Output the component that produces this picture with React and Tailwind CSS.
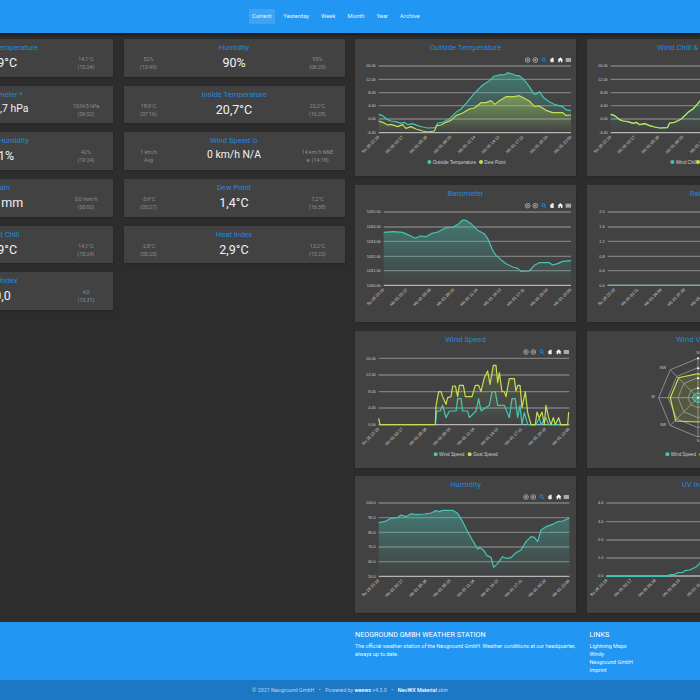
import React from "react";

const TEAL = "#45c4b4";
const LIME = "#c4e04e";

const temp = "88,238 100,242 115,254 125,258 140,260 155,265 165,262 175,269 190,266 205,272 220,276 235,279 258,278 265,264 280,262 300,252 320,232 335,222 350,205 375,175 400,150 420,137 435,123 455,119 465,120 475,113 490,117 500,122 510,122 525,135 540,155 553,176 560,178 570,170 585,190 600,200 615,208 640,215 650,224 665,227";
const dew = "88,258 100,262 115,270 125,268 145,275 160,269 170,280 185,275 200,282 220,288 235,291 255,288 262,272 275,270 290,262 305,256 320,242 340,234 360,222 375,219 395,203 410,203 425,197 437,208 450,197 470,185 495,185 510,182 525,190 540,198 555,214 570,213 590,226 610,233 640,233 650,241 665,240";
const baro = "103,156 130,154 160,156 180,165 198,174 212,167 230,169 245,160 265,155 275,150 290,142 310,140 325,133 340,119 350,120 365,130 385,150 405,160 417,178 430,210 440,225 455,238 470,250 490,260 505,264 515,273 540,272 555,255 570,247 600,247 610,254 625,250 640,243 665,241";
const gust = "88,277 92,296 258,296 260,240 268,197 275,197 280,212 290,235 295,215 305,212 310,180 318,180 325,212 330,178 342,178 348,212 368,212 378,178 388,178 395,197 405,155 415,135 422,175 432,118 440,118 445,170 450,140 458,197 465,197 470,212 480,158 495,158 500,195 505,178 512,178 518,245 528,197 535,260 545,296 558,296 563,258 570,275 578,258 585,296 590,238 598,275 605,296 612,275 618,296 628,275 634,296 655,296 658,258";
const wind = "258,296 262,255 272,255 280,238 290,275 300,255 320,255 325,218 335,218 340,255 355,255 360,275 380,255 388,218 395,255 420,238 428,197 438,197 445,238 465,238 480,275 488,218 498,218 505,275 512,238 518,296 525,260 535,296 560,296 570,275 575,296 590,275 598,296 655,296";
const hum = "88,158 105,155 125,145 145,142 155,135 170,140 185,131 200,134 225,132 245,129 260,122 270,125 280,121 310,121 325,130 340,155 355,185 370,212 385,237 392,232 405,243 412,256 425,262 433,292 445,280 460,260 470,265 485,263 500,248 515,240 530,215 545,200 555,202 565,215 575,180 590,170 610,163 625,155 640,153 660,144";
const uv = "770,319 955,319 960,314 975,313 985,308 1000,307 1005,302 1020,300 1040,290 1050,280 1060,262 1100,220 1150,210 1355,300";

const labels9 = ["Su 28 23:18", "Mo 01 02:17", "Mo 01 05:16", "Mo 01 08:15", "Mo 01 11:14", "Mo 01 14:13", "Mo 01 17:11", "Mo 01 20:10", "Mo 01 23:09"];
const rainLabels = ["Su 28 23:18", "Mo 01 02:11", "Mo 01 04:54", "Mo 01 07:38", "Mo 01 10:21", "Mo 01 13:05", "Mo 01 15:48", "Mo 01 18:32", "Mo 01 21:15"];

function Toolbar({ xs, y }) {
  return (
    <g>
      {[0, 1].map((i) => (
        <g key={i}>
          <circle cx={xs[i]} cy={y} r="7" fill="none" stroke="#c8c8c8" strokeWidth="2" />
          <circle cx={xs[i]} cy={y} r="3.5" fill="#9a9a9a" />
        </g>
      ))}
      <circle cx={xs[2] - 1} cy={y - 2} r="4.5" fill="none" stroke="#1e88e5" strokeWidth="3" />
      <path d={`M${xs[2] + 2} ${y + 1}l5 6`} stroke="#1e88e5" strokeWidth="3" />
      <path d={`M${xs[3] - 6} ${y - 1}l6 -6h5v14h-9z`} fill="#e8e8e8" />
      <path d={`M${xs[4] - 8} ${y}l8 -8 8 8h-2v7h-4v-5h-4v5h-4v-7z`} fill="#ffffff" />
      <rect x={xs[5] - 8} y={y - 6} width="16" height="12" fill="#a8a8a8" />
    </g>
  );
}

function Series({ points, color, fill, base, id, strength = 0.42 }) {
  const first = points.split(" ")[0].split(",")[0];
  const last = points.split(" ").slice(-1)[0].split(",")[0];
  return (
    <g>
      {fill && (
        <>
          <defs>
            <linearGradient id={id} x1="0" y1="0" x2="0" y2="1">
              <stop offset="0" stopColor={color} stopOpacity={strength} />
              <stop offset="1" stopColor={color} stopOpacity="0" />
            </linearGradient>
          </defs>
          <polygon points={`${first},${base} ${points} ${last},${base}`} fill={`url(#${id})`} />
        </>
      )}
      <polyline points={points} fill="none" stroke={color} strokeWidth="3.6" strokeLinejoin="round" />
    </g>
  );
}

function Chart({ title, ox, oy, grid, yLabels, left, right, xStart, xPitch, xLabels = labels9, series = [], legend = [], legendY, toolbar, children }) {
  const base = grid ? grid[grid.length - 1] : 0;
  return (
    <div className="h-[137px] w-[221px] overflow-hidden bg-[#424242] shadow-[0_1px_2px_rgba(0,0,0,0.2)]">
      <div className="h-[18px] text-center text-[7.7px] leading-[18px] text-[#2389dd]">{title}</div>
      <svg viewBox="0 0 663 357" className="block h-[119px] w-[221px]" style={{ fontFamily: '"Liberation Sans", sans-serif' }}>
        <g transform={`translate(${-ox} ${-(oy + 54)})`}>
          {grid &&
            grid.map((y, i) => (
              <g key={y}>
                <line x1={left} x2={right} y1={y} y2={y} stroke={i === grid.length - 1 ? "#b5b5b5" : "#7e7e7e"} strokeWidth="4" />
                <text x={left - 9} y={y + 4} textAnchor="end" fontSize="11.5" fill="#d0d0d0">{yLabels[i]}</text>
              </g>
            ))}
          {series.map((s, i) => (
            <Series key={i} {...s} base={base} id={`${title.replace(/\W/g, "")}${i}`} />
          ))}
          {grid &&
            xLabels.map((l, i) => {
              const x = xStart + xPitch * i;
              return (
                <text key={l} x={x + 2} y={base + 14} textAnchor="end" fontSize="12.5" fill="#d8d8d8" transform={`rotate(-45 ${x + 2} ${base + 14})`}>{l}</text>
              );
            })}
          {children}
          {toolbar && <Toolbar xs={toolbar.xs} y={toolbar.y} />}
          {legend.map((l) => (
            <g key={l.label}>
              <circle cx={l.x} cy={legendY} r="6" fill={l.color} />
              <text x={l.x + 10} y={legendY + 5} fontSize="14" fill="#d0d0d0">{l.label}</text>
            </g>
          ))}
        </g>
      </svg>
    </div>
  );
}

function Rose() {
  const cx = 355, cy = 215;
  const oct = (r) =>
    [0, 1, 2, 3, 4, 5, 6, 7]
      .map((i) => {
        const a = (i * Math.PI) / 4;
        return `${cx + r * Math.sin(a)},${cy - r * Math.cos(a)}`;
      })
      .join(" ");
  return (
    <g>
      {[30, 60, 90, 118].map((r) => (
        <polygon key={r} points={oct(r)} fill="none" stroke="#9a9a9a" strokeWidth="2.5" />
      ))}
      {[0, 1, 2, 3, 4, 5, 6, 7].map((i) => {
        const a = (i * Math.PI) / 4;
        return <line key={i} x1={cx} y1={cy} x2={cx + 118 * Math.sin(a)} y2={cy - 118 * Math.cos(a)} stroke="#9a9a9a" strokeWidth="2.5" />;
      })}
      <polygon points="355,143 410,160 435,215 410,275 355,288 288,285 272,215 297,155" fill={LIME} fillOpacity="0.14" stroke={LIME} strokeWidth="3.6" />
      <polygon points="355,200 368,208 375,215 368,225 355,230 345,225 338,215 345,205" fill={TEAL} fillOpacity="0.3" stroke={TEAL} strokeWidth="3.6" />
      {[97, 127, 157, 187, 215].map((y) => (
        <circle key={y} cx={cx} cy={y} r="3" fill="#fff" />
      ))}
      <text x="355" y="83" textAnchor="middle" fontSize="11.5" fill="#c8c8c8">N</text>
      <text x="250" y="130" textAnchor="middle" fontSize="11.5" fill="#c8c8c8">NW</text>
      <text x="220" y="216" textAnchor="middle" fontSize="11.5" fill="#c8c8c8">W</text>
      <text x="250" y="299" textAnchor="middle" fontSize="11.5" fill="#c8c8c8">SW</text>
      <text x="355" y="347" textAnchor="middle" fontSize="11.5" fill="#c8c8c8">S</text>
    </g>
  );
}

function Stat({ title, value, min, minAt, max, maxAt, small }) {
  return (
    <div className="grid h-[37.6px] w-[221px] grid-cols-[54px_1fr_54px] bg-[#424242] shadow-[0_1px_2px_rgba(0,0,0,0.2)]">
      <div className="pr-[4px] pt-[16px] text-center text-[5.3px] leading-[8px] text-[#8f8f8f]">
        <div>{min}</div>
        <div>{minAt}</div>
      </div>
      <div className="pt-[3px] text-center">
        <div className="text-[7.6px] leading-[12px] text-[#2389dd]">{title}</div>
        <div className={small ? "text-[10.4px] leading-[16px] text-[#f2f2f2]" : "text-[12.5px] leading-[17px] text-[#f2f2f2]"}>{value}</div>
      </div>
      <div className="pt-[16px] text-center text-[5.3px] leading-[8px] text-[#8f8f8f]">
        <div>{max}</div>
        <div>{maxAt}</div>
      </div>
    </div>
  );
}

const navItems = ["Current", "Yesterday", "Week", "Month", "Year", "Archive"];

export default function App() {
  return (
    <div className="h-[700px] w-[700px] overflow-hidden bg-[#2d2d2d] font-['Roboto',sans-serif]">
      <header className="flex h-[33px] items-center gap-[5px] bg-[#2196f3] pl-[248.5px] shadow-[0_2px_3px_rgba(0,0,0,0.4)]">
        {navItems.map((n, i) => (
          <span key={n} className={`px-[3.5px] py-[4px] text-[5.9px] leading-[7px] text-[#e8f4fe] ${i === 0 ? "bg-[#3fa3f4]" : ""}`}>{n}</span>
        ))}
      </header>

      <main className="-ml-[108px] grid h-[589px] w-[916px] grid-cols-[repeat(4,221px)] gap-x-[10.5px] pt-[6px]">
        <div className="flex flex-col gap-[9.1px]">
          <Stat title="Outside Temperature" value="2,9°C" min="-2,6°C" minAt="(05:24)" max="14,1°C" maxAt="(15:24)" />
          <Stat small title="Barometer *" value="1032,7 hPa" min="1030,9 hPa" minAt="(17:21)" max="1034,5 hPa" maxAt="(09:52)" />
          <Stat title="Inside Humidity" value="41%" min="38%" minAt="(07:12)" max="42%" maxAt="(19:24)" />
          <Stat title="Rain" value="0,0 mm" min="0,0 mm" minAt="Today" max="0,0 mm/h" maxAt="(00:00)" />
          <Stat title="Wind Chill" value="2,9°C" min="-2,6°C" minAt="(05:24)" max="14,1°C" maxAt="(15:24)" />
          <Stat title="UV Index" value="0,0" min="0,0" minAt="(00:00)" max="4,0" maxAt="(13:31)" />
        </div>
        <div className="flex flex-col gap-[9.1px]">
          <Stat title="Humidity" value="90%" min="52%" minAt="(13:49)" max="95%" maxAt="(06:29)" />
          <Stat title="Inside Temperature" value="20,7°C" min="18,9°C" minAt="(07:16)" max="22,2°C" maxAt="(16:28)" />
          <Stat small title={<>Wind Speed <span className="text-[6.5px]">⊙</span></>} value="0 km/h N/A" min="1 km/h" minAt="Avg" max="14 km/h NNE" maxAt="⊛ (14:18)" />
          <Stat title="Dew Point" value="1,4°C" min="-3,9°C" minAt="(05:27)" max="7,2°C" maxAt="(16:38)" />
          <Stat title="Heat Index" value="2,9°C" min="-2,8°C" minAt="(05:25)" max="13,2°C" maxAt="(15:23)" />
        </div>
        <div className="flex flex-col gap-[8.8px]">
          <Chart title="Outside Temperature" ox={17} oy={12} grid={[93, 133, 173, 212, 252, 293]} yLabels={["16.00", "12.00", "8.00", "4.00", "0.00", "-4.00"]} left={88} right={665} xStart={88} xPitch={72.2}
            series={[{ points: temp, color: TEAL, fill: true }, { points: dew, color: LIME, fill: true }]}
            legend={[{ x: 240, color: TEAL, label: "Outside Temperature" }, { x: 395, color: LIME, label: "Dew Point" }]} legendY={381}
            toolbar={{ xs: [535, 558, 583, 608, 633, 657], y: 75 }} />
          <Chart title="Barometer" ox={17} oy={14} grid={[95, 140, 183, 228, 271, 315]} yLabels={["1035.00", "1034.00", "1033.00", "1032.00", "1031.00", "1030.00"]} left={103} right={665} xStart={103} xPitch={70.2}
            series={[{ points: baro, color: TEAL, fill: true }]} toolbar={{ xs: [535, 558, 583, 608, 633, 657], y: 76 }} />
          <Chart title="Wind Speed" ox={17} oy={15} grid={[97, 147, 197, 246, 296]} yLabels={["16.00", "12.00", "8.00", "4.00", "0.00"]} left={88} right={660} xStart={88} xPitch={71.5}
            series={[{ points: wind, color: TEAL, fill: true, strength: 0.12 }, { points: gust, color: LIME, fill: true, strength: 0.14 }]}
            legend={[{ x: 259, color: TEAL, label: "Wind Speed" }, { x: 361, color: LIME, label: "Gust Speed" }]} legendY={385}
            toolbar={{ xs: [530, 552, 577, 602, 628, 651], y: 78 }} />
          <Chart title="Humidity" ox={17} oy={18} grid={[99, 143, 187, 231, 275, 319]} yLabels={["100.0", "90.0", "80.0", "70.0", "60.0", "50.0"]} left={88} right={660} xStart={88} xPitch={71.5}
            series={[{ points: hum, color: TEAL, fill: true }]} toolbar={{ xs: [530, 552, 577, 602, 628, 651], y: 81 }} />
        </div>
        <div className="flex flex-col gap-[8.8px]">
          <Chart title="Wind Chill & Heat Index" ox={17} oy={12} grid={[93, 133, 173, 212, 252, 293]} yLabels={["16.00", "12.00", "8.00", "4.00", "0.00", "-4.00"]} left={88} right={665} xStart={88} xPitch={72.2}
            series={[{ points: temp, color: TEAL, fill: true }, { points: temp, color: LIME }]}
            legend={[{ x: 273, color: TEAL, label: "Wind Chill" }, { x: 350, color: LIME, label: "Heat Index" }]} legendY={381} />
          <Chart title="Rain" ox={22} oy={14} grid={[95, 140, 183, 228, 271, 315]} yLabels={["2.0", "1.6", "1.2", "0.8", "0.4", "0.0"]} left={84} right={668} xStart={105} xPitch={70} xLabels={rainLabels}
            series={[{ points: "84,315 668,315", color: TEAL }]} />
          <Chart title="Wind Vector" ox={22} oy={15} legend={[{ x: 263, color: TEAL, label: "Wind Speed" }, { x: 365, color: LIME, label: "Gust Speed" }]} legendY={385}>
            <Rose />
          </Chart>
          <Chart title="UV Index" ox={712} oy={18} grid={[99, 155, 210, 264, 318]} yLabels={["4.0", "3.0", "2.0", "1.0", "0.0"]} left={770} right={1355} xStart={772} xPitch={72.7}
            series={[{ points: uv, color: TEAL, fill: true }]} />
        </div>
      </main>

      <footer>
        <div className="h-[58px] bg-[#2196f3]">
          <div className="-ml-[108px] grid w-[916px] grid-cols-[repeat(4,221px)] gap-x-[10.5px] pt-[8px] text-[#eef7ff]">
            <div className="col-start-3 text-[5.4px] leading-[8.1px]">
              <div className="mb-[2px] text-[7.2px] leading-[10px] uppercase text-white">Neoground GmbH Weather Station</div>
              <p className="w-[226px]">The official weather station of the Neoground GmbH. Weather conditions at our headquarter, always up to date.</p>
            </div>
            <div className="pl-[3px] text-[5.4px] leading-[8.1px]">
              <div className="mb-[2px] text-[7.2px] leading-[10px] uppercase text-white">Links</div>
              <div>Lightning Maps</div>
              <div>Windy</div>
              <div>Neoground GmbH</div>
              <div>Imprint</div>
            </div>
          </div>
        </div>
        <div className="flex h-[20px] items-center justify-center gap-[4.5px] bg-[#1c78c5] text-[5.4px] text-[#b7d6f0]">
          <span>© 2021 Neoground GmbH</span>
          <span>•</span>
          <span>Powered by <b className="font-medium text-white">weewx</b> v4.3.0</span>
          <span>•</span>
          <span><b className="font-medium text-white">NeoWX Material</b> skin</span>
        </div>
      </footer>
    </div>
  );
}
